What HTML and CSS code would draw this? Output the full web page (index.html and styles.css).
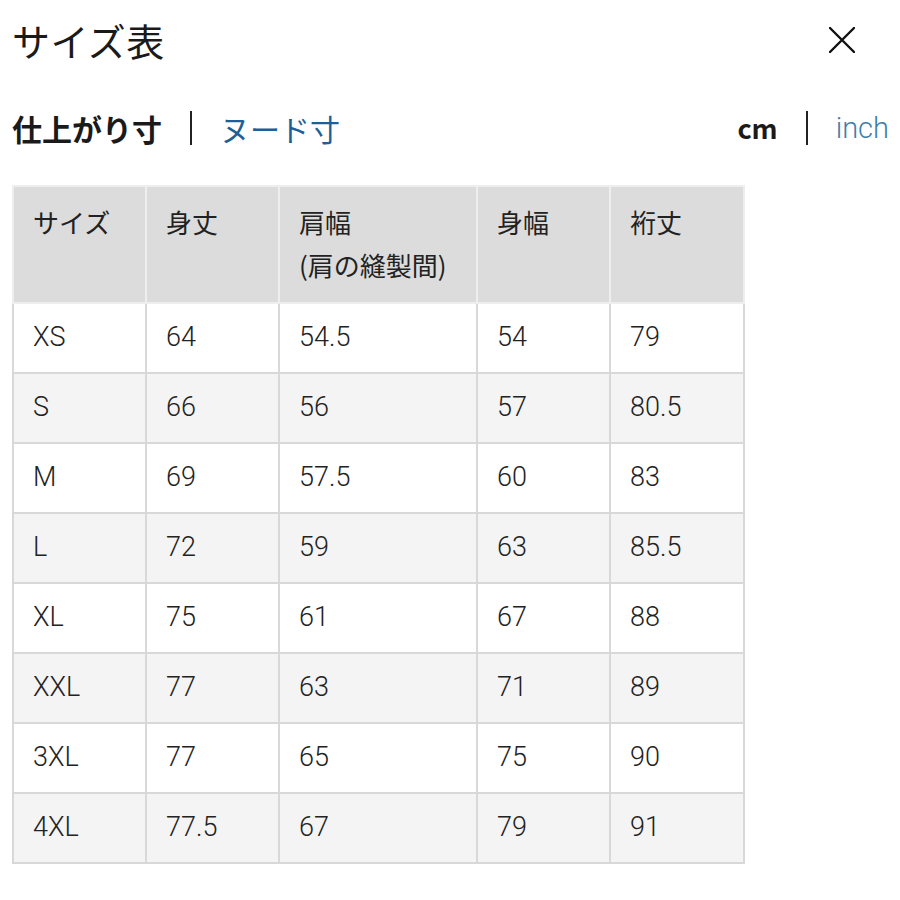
FILE: index.html
```html
<!DOCTYPE html>
<html lang="ja">
<head>
<meta charset="utf-8">
<title>サイズ表</title>
<link rel="stylesheet" href="styles.css">
</head>
<body>
<div class="page">
  <div class="titlebar">
    <h1 class="title">サイズ表</h1>
    <span class="close" aria-label="閉じる">
      <svg width="26" height="26" viewBox="0 0 26 26"><path d="M1 1 L25 25 M25 1 L1 25" stroke="#111" stroke-width="2.4" stroke-linecap="round" fill="none"/></svg>
    </span>
  </div>
  <div class="tabs">
    <div class="tabgroup">
      <span class="tab active">仕上がり寸</span>
      <span class="sep"></span>
      <span class="tab link dark">ヌード寸</span>
    </div>
    <div class="tabgroup">
      <span class="tab active unit">cm</span>
      <span class="sep"></span>
      <span class="tab link light unit">inch</span>
    </div>
  </div>
  <table class="sizes">
    <colgroup>
      <col class="c1"><col class="c2"><col class="c3"><col class="c4"><col class="c5">
    </colgroup>
    <thead>
      <tr><th>サイズ</th><th>身丈</th><th>肩幅<br>(肩の縫製間)</th><th>身幅</th><th>裄丈</th></tr>
    </thead>
    <tbody>
      <tr><td>XS</td><td>64</td><td>54.5</td><td>54</td><td>79</td></tr>
      <tr><td>S</td><td>66</td><td>56</td><td>57</td><td>80.5</td></tr>
      <tr><td>M</td><td>69</td><td>57.5</td><td>60</td><td>83</td></tr>
      <tr><td>L</td><td>72</td><td>59</td><td>63</td><td>85.5</td></tr>
      <tr><td>XL</td><td>75</td><td>61</td><td>67</td><td>88</td></tr>
      <tr><td>XXL</td><td>77</td><td>63</td><td>71</td><td>89</td></tr>
      <tr><td>3XL</td><td>77</td><td>65</td><td>75</td><td>90</td></tr>
      <tr><td>4XL</td><td>77.5</td><td>67</td><td>79</td><td>91</td></tr>
    </tbody>
  </table>
</div>
</body>
</html>
```

FILE: styles.css
```css
* { box-sizing: border-box; }
html, body { margin: 0; padding: 0; background: #fff; }
body {
  font-family: "Noto Sans CJK JP", "Noto Sans", sans-serif;
  color: #1a1a1a;
  width: 900px;
  height: 900px;
  overflow: hidden;
}
.page { padding: 15px 11px 0 12px; }
.titlebar {
  display: flex;
  justify-content: space-between;
  align-items: center;
  height: 50px;
  padding-right: 34px;
}
.title {
  margin: 0;
  font-size: 38px;
  font-weight: 400;
  line-height: 50px;
  letter-spacing: 0.5px;
}
.close { display: flex; width: 26px; height: 26px; }
.tabs {
  margin-top: 43px;
  display: flex;
  justify-content: space-between;
  align-items: center;
  height: 40px;
}
.tabgroup { display: flex; align-items: center; }
.tab { font-size: 30px; line-height: 40px; }
.tab.active { font-weight: 700; }
.tab.unit { font-size: 27px; }
.tab.link { font-weight: 400; }
.tab.dark { color: #1d5f98; }
.tab.light { color: #3f7eaa; font-family: "Roboto", "Noto Sans", sans-serif; font-weight: 300; font-size: 29px; }
.sep {
  display: block;
  width: 0;
  height: 34px;
  border-left: 2px solid #222;
  margin: 0 28px;
}
.sizes {
  margin-top: 37px;
  border-collapse: collapse;
  table-layout: fixed;
  width: 731px;
  font-size: 26px;
}
.c1 { width: 133px; }
.c2 { width: 133px; }
.c3 { width: 198px; }
.c4 { width: 133px; }
.c5 { width: 134px; }
.sizes th, .sizes td {
  border: 2px solid #d8d8d8;
  text-align: left;
  padding: 0 0 0 19px;
}
.sizes th {
  background: #dcdcdc;
  font-weight: 400;
  font-size: 26px;
  line-height: 43px;
  height: 117px;
  vertical-align: top;
  padding-top: 13px;
  border-color: #eeeeee;
  color: #222;
}
.sizes td {
  height: 70px;
  font-family: "Roboto", "Noto Sans", sans-serif;
  font-size: 27px;
  font-weight: 300;
  vertical-align: middle;
  color: #222;
  padding-bottom: 2px;
}
.sizes tbody tr:nth-child(even) td { background: #f4f4f4; }
```
